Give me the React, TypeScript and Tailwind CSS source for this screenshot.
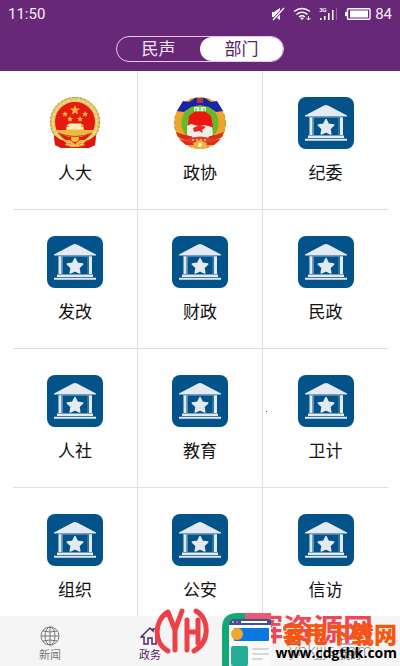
import React from "react";

const fontStack = "font-['Noto_Sans','Noto_Sans_CJK_SC',sans-serif]";

function HallIcon() {
  return (
    <svg viewBox="0 0 56 52" className="h-[52px] w-14" aria-hidden="true">
      <rect width="56" height="52" rx="8" fill="#03538b" />
      <g fill="#e5eaf0">
        <path d="M7 18.5 26 8.5q2-1 4 0l19 10v1H7z" />
        <path d="M11.500 20h3v18h-3zM42 20h3v18h-3z" />
        <path d="M10 38.5h36V41H10zM7 41.7h42v2H7z" />
        <path d="m28 22.500 2.400 4.800 5.300.8-3.800 3.700.9 5.200-4.800-2.300-4.800 2.300.9-5.200-3.800-3.700 5.300-.8z" stroke="#e5eaf0" strokeWidth="1.500" strokeLinejoin="round" />
      </g>
      <path d="M15.500 20.500V38M41 20.500V38M11 20.300h34" stroke="#78a6c7" strokeWidth=".7" />
    </svg>
  );
}

function NationalEmblem() {
  return (
    <svg viewBox="0 0 56 52" className="h-[52px] w-14" aria-hidden="true">
      <path d="m7 36 1 12 7 3h26l7-3 1-12z" fill="#e0170f" />
      <circle cx="28" cy="25" r="22.500" fill="#e51a10" stroke="#e3c76e" strokeWidth="5" />
      <circle cx="28" cy="25" r="24.500" fill="none" stroke="#a88625" strokeWidth="1" strokeDasharray="2 2" />
      <circle cx="28" cy="25" r="22" fill="none" stroke="#f5df91" strokeWidth="1.500" strokeDasharray="3 2" />
      <path d="m7 38 1 10 6 3 6-5 8 3 8-3 6 5 6-3 1-10-7 5-14 2-14-2z" fill="#df160f" />
      <g fill="#f1b93e">
        <path d="m28 8 1.400 3.400 3.800.1-3 2.300 1 3.700-3.200-2.100-3.200 2.100 1-3.700-3-2.300 3.800-.1z" />
        <path d="m18 14 1 2 2 .2-1.500 1.500.3 2-1.800-1-2 .8.6-2-1.400-1.500 2-.1zM38 14l1 2 2 .2-1.500 1.500.3 2-1.800-1-2 .8.6-2-1.400-1.500 2-.1zM23 19l1 2 2 .2-1.500 1.500.3 2-1.800-1-2 .8.6-2-1.400-1.500 2-.1zM33 19l1 2 2 .2-1.500 1.500.3 2-1.800-1-2 .8.6-2-1.400-1.500 2-.1z" />
        <path d="M21 27h14l2 2H19zM19 30h18v3h9v3l-12 4-6-2-6 2-12-4v-3h9z" />
        <circle cx="28" cy="41" r="4" />
        <path d="M16 43h7l5 4 5-4h7l-3 3-5 1v3h-8v-3l-5-1z" />
      </g>
      <path d="M22 28h12M20 31h16" stroke="#fff0bb" strokeWidth="3" />
      <path d="M11 36q17 7 34 0" fill="none" stroke="#b64416" strokeWidth="1" />
    </svg>
  );
}

function ConsultativeEmblem() {
  return (
    <svg viewBox="0 0 56 52" className="h-[52px] w-14" aria-hidden="true">
      <circle cx="28" cy="26" r="22" fill="#66b72b" stroke="#eba62b" strokeWidth="7" />
      <circle cx="28" cy="26" r="25.500" fill="none" stroke="#d88c1c" strokeWidth="1" strokeDasharray="4 2" />
      <path d="M5 14 11 4l6 1 6-4h10l6 4 6-1 6 10-7 1-7-5-9-2-9 2-7 5z" fill="#1525aa" />
      <path d="M25 1h6v5h-6z" fill="#b63347" />
      <path d="M22 10h12v4H22z" fill="#e8f0df" />
      <path d="M24 11v3M28 10v4M32 11v3" stroke="#6aa145" />
      <path d="m16 29 1-10 5-4h12l5 4 2 11-5 1-7-1-6 1z" fill="#ed1710" />
      <path d="m15 29 4-2 7 2 6-1 8 2 1 7-5 7H21l-6-7z" fill="#f2efe7" />
      <path d="m21 31 7-3 6 2-4 3 1 3-4-2-5 1z" fill="#e52823" />
      <path d="M4 35q24 10 48 0l-2 5q-22 11-44 0zM7 42l9 2 6-2h12l6 2 9-2-7 6H14z" fill="#e32a19" />
      <path d="m17 34 5 2 6 3 7-3 5-2-4 7H21z" fill="#ecece9" />
      <path d="M15 42q13-5 26 0l-2 4q-11-4-22 0z" fill="#d7442f" />
      <path d="M20 43h16" stroke="#f4bd6c" strokeWidth="1.500" strokeDasharray="2 2" />
      <path d="m21 46 7-3 7 3-2 6H23z" fill="#edb248" />
      <circle cx="28" cy="48" r="2" fill="#fff2bd" />
    </svg>
  );
}

const departments = [
  { name: "人大", Icon: NationalEmblem },
  { name: "政协", Icon: ConsultativeEmblem },
  { name: "纪委", Icon: HallIcon },
  { name: "发改", Icon: HallIcon },
  { name: "财政", Icon: HallIcon },
  { name: "民政", Icon: HallIcon },
  { name: "人社", Icon: HallIcon },
  { name: "教育", Icon: HallIcon },
  { name: "卫计", Icon: HallIcon },
  { name: "组织", Icon: HallIcon },
  { name: "公安", Icon: HallIcon },
  { name: "信访", Icon: HallIcon },
];

function StatusBar() {
  return (
    <div className="flex h-[27px] items-center justify-between px-2 text-[#f7effa]">
      <time className="font-[Roboto,sans-serif] text-[15px] leading-5">11:50</time>
      <div className="flex items-center gap-2">
        <svg viewBox="0 0 14 14" className="size-[14px]" aria-label="静音" fill="white">
          <path d="M1 5h2l6-4v12L6 11l-1-1H1z" />
          <path d="M13 1 2 13" stroke="#682878" strokeWidth="3" />
          <path d="m13 1-11 12" stroke="white" strokeWidth="1.300" />
        </svg>
        <svg viewBox="0 0 18 14" className="h-[14px] w-[18px]" aria-label="无线网络" fill="none" stroke="white" strokeWidth="1.500">
          <path d="M1 4.500q8-6 16 0M3.500 7.500q5.500-4.500 11 0M6 10q3-2.500 6 0" />
          <path d="m7 11 2 2 2-2q-2-1-4 0" fill="white" stroke="none" />
          <path d="M15.500 9v4m-2-2 2 2 2-2" strokeWidth="1" />
        </svg>
        <div className="relative">
          <svg viewBox="0 0 18 14" className="h-[14px] w-[18px]" aria-label="信号" fill="white">
            <path d="M1 11h1.500v2H1zM5 9h1.500v4H5zM9 6h1.500v7H9zM13 3h1.500v10H13z" />
            <path d="M17 1h1v12h-1z" opacity=".3" />
          </svg>
          <span className="absolute left-0 top-0 font-[Roboto,sans-serif] text-[6px] font-bold leading-[6px]">3G</span>
        </div>
        <svg viewBox="0 0 26 12" className="h-3 w-[26px]" aria-label="电池">
          <rect x="2.500" y=".7" width="22.500" height="10.600" rx="1" fill="none" stroke="white" strokeWidth="1.400" />
          <path d="M0 4h2v4H0zM5 2.500h18v7H5z" fill="white" />
        </svg>
        <span className="-ml-1 font-[Roboto,sans-serif] text-[15px] leading-5">84</span>
      </div>
    </div>
  );
}

function GlobeIcon() {
  return (
    <svg viewBox="0 0 20 20" className="size-5" fill="none" stroke="#777" aria-hidden="true">
      <circle cx="10" cy="10" r="9" />
      <ellipse cx="10" cy="10" rx="5" ry="9" />
      <path d="M10 1v18M1 10h18M3 5q7 2 14 0M3 15q7-2 14 0" />
    </svg>
  );
}

function HomeIcon() {
  return (
    <svg viewBox="0 0 20 20" className="size-5" fill="none" stroke="#512768" strokeWidth="1.500" aria-hidden="true">
      <path d="m1 11 9-9 3 3V3h3v5l3 3h-3v7h-4v-6H8v6H4v-7z" />
    </svg>
  );
}

function ServiceIcon() {
  return (
    <svg viewBox="0 0 20 20" className="size-5" fill="none" stroke="#777" aria-hidden="true">
      <rect x="3" y="3" width="14" height="14" rx="2" />
      <path d="M6 8h8M6 12h8" />
    </svg>
  );
}

function UserIcon() {
  return (
    <svg viewBox="0 0 20 20" className="size-5" fill="none" stroke="#777" aria-hidden="true">
      <circle cx="10" cy="6" r="4" />
      <path d="M1 18v-2q0-3 3-3h12q3 0 3 3v2z" />
    </svg>
  );
}

const tabs = [
  { name: "新闻", Icon: GlobeIcon },
  { name: "政务", Icon: HomeIcon, active: true },
  { name: "服务", Icon: ServiceIcon },
  { name: "我的", Icon: UserIcon },
];

function Watermarks() {
  return (
    <div className="pointer-events-none absolute bottom-0 right-0 h-[60px] w-[246px]">
      <svg viewBox="0 0 56 50" className="absolute left-0 top-0 h-[50px] w-14" fill="none" stroke="#ed4148" strokeWidth="5" strokeLinecap="round" strokeLinejoin="round" aria-label="YH">
        <path d="M14 6C0 14-1 37 14 45M14 6l7 18M28 5l-7 19v20M33 14v30M33 26h11M44 14v23M42 5c14 8 14 31-2 40" />
      </svg>
      <strong className="absolute right-[27px] top-[3px] whitespace-nowrap text-[30px] font-bold leading-10 text-[#ed4856]">辉资源网</strong>
      <span className="absolute right-7 top-[34px] font-['Open_Sans',sans-serif] text-[17px] font-light leading-5 text-[#888]">yhkjjjs.com</span>
      <svg viewBox="0 0 50 54" className="absolute left-[67px] top-[7px] h-[54px] w-[50px]" aria-hidden="true">
        <path d="M1 54V15Q1 0 17 0h8v54z" fill="#13a875" />
        <path d="M24 0h26v8H24z" fill="#ed5974" />
        <path d="M8 54V10q0-4 4-4h36q3 0 3 4v44z" fill="#fafafa" />
        <path d="M8 12v-2q0-4 4-4h36q3 0 3 4v2z" fill="#40519b" />
        <circle cx="12" cy="9" r="1" fill="#f9c74e" />
        <circle cx="16" cy="9" r="1" fill="#e96d65" />
        <path d="M20 8h26v2H20z" fill="white" />
        <rect x="13" y="15" width="35" height="13" rx="1" fill="#0879df" />
        <circle cx="16" cy="21" r="6" fill="#f5a72d" />
        <rect x="10" y="33" width="17" height="20" rx="2" fill="#25ac95" />
        <path d="M32 36h15M32 41h15M32 46h9" stroke="#d6d8da" strokeWidth="2" strokeLinecap="round" />
      </svg>
      <strong className="absolute right-[3px] top-3 whitespace-nowrap text-[23px] font-black leading-8 text-[#f8560b]">睿甩下载网</strong>
      <strong className="absolute right-[3px] top-[37px] font-['Open_Sans',sans-serif] text-[14px] font-bold leading-5 text-black">www.cdgthk.com</strong>
    </div>
  );
}

export default function App() {
  return (
    <div className={`relative flex h-screen flex-col overflow-hidden bg-[#fefefe] ${fontStack}`}>
      <header className="flex h-[71px] shrink-0 flex-col bg-[#682878]">
        <StatusBar />
        <div className="mx-auto mt-[9px] flex h-[26px] w-[168px] overflow-hidden rounded-full border border-[#e6c9ef] text-[17px] leading-6">
          <button type="button" className="flex-1 text-[#f4e5f8]">民声</button>
          <button type="button" className="flex-1 rounded-full bg-white text-[#562464]" aria-pressed="true">部门</button>
        </div>
      </header>

      <main className="relative min-h-0 flex-1 overflow-hidden">
        <div className="ml-[13px] mr-3 grid grid-cols-3">
          {departments.map(({ name, Icon }, index) => (
            <button
              key={name}
              type="button"
              className={`flex h-[139px] flex-col items-center border-b border-[#dedede] pt-[26px] ${index % 3 < 2 ? "border-r" : ""}`}
            >
              <Icon />
              <span className="mt-3 text-[17px] leading-6 text-[#111]">{name}</span>
            </button>
          ))}
        </div>
        <span className="absolute left-2/3 top-[340px] size-px -translate-x-px bg-[#174b60]" />
      </main>

      <nav className="grid h-[50px] shrink-0 grid-cols-4 bg-[#f5f5f5]">
        {tabs.map(({ name, Icon, active }) => (
          <button
            key={name}
            type="button"
            className={`flex flex-col items-center pt-[10px] text-[11px] leading-4 ${active ? "text-[#512768]" : "text-[#777]"}`}
          >
            <Icon />
            <span className="mt-px">{name}</span>
          </button>
        ))}
      </nav>
      <Watermarks />
    </div>
  );
}
